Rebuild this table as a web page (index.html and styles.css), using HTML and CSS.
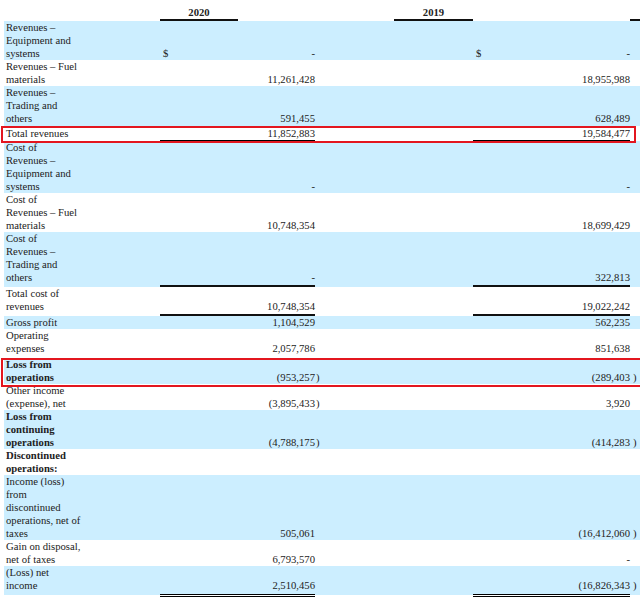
FILE: index.html
```html
<!DOCTYPE html>
<html>
<head>
<meta charset="utf-8">
<link rel="stylesheet" href="styles.css">
</head>
<body>
<div class="sheet">
  <div class="head">
    <div class="h-gap1"></div>
    <div class="h-year h-y1">2020</div>
    <div class="h-gap2"></div>
    <div class="h-year h-y2">2019</div>
    <div class="h-gap3"></div>
    <div class="h-year h-y3"></div>
  </div>
  <table class="fin">
    <colgroup>
      <col class="c-label"><col class="c-gap"><col class="c-cur"><col class="c-num1"><col class="c-par1"><col class="c-gap2"><col class="c-cur"><col class="c-num2"><col class="c-par2">
    </colgroup>
    <tbody>
      <tr class="b">
        <td class="lab">Revenues –<br>Equipment and<br>systems</td><td></td><td class="cur">$</td><td class="num">-</td><td class="par"></td><td></td><td class="cur">$</td><td class="num">-</td><td class="par2"></td>
      </tr>
      <tr class="r2">
        <td class="lab">Revenues – Fuel<br>materials</td><td></td><td class="cur"></td><td class="num">11,261,428</td><td class="par"></td><td></td><td class="cur"></td><td class="num">18,955,988</td><td class="par2"></td>
      </tr>
      <tr class="b r3">
        <td class="lab">Revenues –<br>Trading and<br>others</td><td></td><td class="cur"></td><td class="num">591,455</td><td class="par"></td><td></td><td class="cur"></td><td class="num">628,489</td><td class="par2"></td>
      </tr>
      <tr class="dbl total">
        <td class="lab">Total revenues</td><td></td><td class="cur u"></td><td class="num u">11,852,883</td><td class="par"></td><td></td><td class="cur u"></td><td class="num u">19,584,477</td><td class="par2"></td>
      </tr>
      <tr class="b r5">
        <td class="lab">Cost of<br>Revenues –<br>Equipment and<br>systems</td><td></td><td class="cur"></td><td class="num">-</td><td class="par"></td><td></td><td class="cur"></td><td class="num">-</td><td class="par2"></td>
      </tr>
      <tr>
        <td class="lab">Cost of<br>Revenues – Fuel<br>materials</td><td></td><td class="cur"></td><td class="num">10,748,354</td><td class="par"></td><td></td><td class="cur"></td><td class="num">18,699,429</td><td class="par2"></td>
      </tr>
      <tr class="b sgl r7">
        <td class="lab">Cost of<br>Revenues –<br>Trading and<br>others</td><td></td><td class="cur u"></td><td class="num u">-</td><td class="par"></td><td></td><td class="cur u"></td><td class="num u">322,813</td><td class="par2"></td>
      </tr>
      <tr class="sgl r8">
        <td class="lab">Total cost of<br>revenues</td><td></td><td class="cur u"></td><td class="num u">10,748,354</td><td class="par"></td><td></td><td class="cur u"></td><td class="num u">19,022,242</td><td class="par2"></td>
      </tr>
      <tr class="b r9">
        <td class="lab">Gross profit</td><td></td><td class="cur"></td><td class="num">1,104,529</td><td class="par"></td><td></td><td class="cur"></td><td class="num">562,235</td><td class="par2"></td>
      </tr>
      <tr class="opex">
        <td class="lab">Operating<br>expenses</td><td></td><td class="cur"></td><td class="num">2,057,786</td><td class="par"></td><td></td><td class="cur"></td><td class="num">851,638</td><td class="par2"></td>
      </tr>
      <tr class="b">
        <td class="lab bold">Loss from<br>operations</td><td></td><td class="cur"></td><td class="num">(953,257</td><td class="par">)</td><td></td><td class="cur"></td><td class="num">(289,403</td><td class="par2">)</td>
      </tr>
      <tr>
        <td class="lab">Other income<br>(expense), net</td><td></td><td class="cur"></td><td class="num">(3,895,433</td><td class="par">)</td><td></td><td class="cur"></td><td class="num">3,920</td><td class="par2"></td>
      </tr>
      <tr class="b">
        <td class="lab bold">Loss from<br>continuing<br>operations</td><td></td><td class="cur"></td><td class="num">(4,788,175</td><td class="par">)</td><td></td><td class="cur"></td><td class="num">(414,283</td><td class="par2">)</td>
      </tr>
      <tr>
        <td class="lab bold">Discontinued<br>operations:</td><td></td><td class="cur"></td><td class="num"></td><td class="par"></td><td></td><td class="cur"></td><td class="num"></td><td class="par2"></td>
      </tr>
      <tr class="b r15">
        <td class="lab">Income (loss)<br>from<br>discontinued<br>operations, net of<br>taxes</td><td></td><td class="cur"></td><td class="num">505,061</td><td class="par"></td><td></td><td class="cur"></td><td class="num">(16,412,060</td><td class="par2">)</td>
      </tr>
      <tr>
        <td class="lab">Gain on disposal,<br>net of taxes</td><td></td><td class="cur"></td><td class="num">6,793,570</td><td class="par"></td><td></td><td class="cur"></td><td class="num">-</td><td class="par2"></td>
      </tr>
      <tr class="b dbl last">
        <td class="lab">(Loss) net<br>income</td><td></td><td class="cur u"></td><td class="num u">2,510,456</td><td class="par"></td><td></td><td class="cur u"></td><td class="num u">(16,826,343</td><td class="par2">)</td>
      </tr>
    </tbody>
  </table>
  <div class="mark mark-total"></div>
  <div class="mark mark-loss"></div>
</div>
</body>
</html>
```

FILE: styles.css
```css
html, body {
  margin: 0;
  padding: 0;
  background: #ffffff;
  overflow: hidden;
}

body {
  width: 640px;
  height: 603px;
  font-family: "Liberation Serif", "Times New Roman", serif;
  font-size: 10.67px;
  line-height: 13px;
  color: #222222;
}

.sheet {
  position: relative;
  width: 640px;
}

.head {
  display: flex;
  padding-top: 5.6px;
}

.h-gap1 { width: 160px; }
.h-gap2 { width: 156px; }
.h-gap3 { width: 157px; }

.h-year {
  height: 13px;
  line-height: 13px;
  font-weight: bold;
  text-align: center;
  border-bottom: 2px solid #111;
}
.h-y1 { width: 78px; }
.h-y2 { width: 79px; }
.h-y3 { width: 10px; }

.fin {
  margin-left: 4px;
  width: 636px;
  table-layout: fixed;
  border-collapse: separate;
  border-spacing: 0;
}

.c-label { width: 86px; }
.c-gap { width: 70px; }
.c-cur { width: 15px; }
.c-num1 { width: 140px; }
.c-par1 { width: 5px; }
.c-gap2 { width: 153px; }
.c-num2 { width: 142px; }
.c-par2 { width: 10px; }

.fin td {
  padding: 0;
  vertical-align: bottom;
  white-space: nowrap;
}

.fin tr.b { background: #cceeff; }

/* small spacing adjustments between rows */
.fin tr.r2 td { padding-bottom: 0.3px; }
.fin tr.r3 td { padding-bottom: 1.4px; }
.fin tr.total td { padding-top: 1px; padding-bottom: 0.6px; }
.fin tr.r5 td { padding-bottom: 0.5px; }
.fin tr.r7 td { padding-bottom: 0.7px; }
.fin tr.r8 td { padding-bottom: 0.8px; }
.fin tr.r9 td { padding-bottom: 0.4px; }
.fin tr.opex td { padding-bottom: 2.3px; }
.fin tr.r15 td { padding-bottom: 0.5px; }
.fin tr.last td { padding-bottom: 2.5px; }

.fin td.lab { padding-left: 2px; }
.bold { font-weight: bold; }

.fin td.cur { padding-left: 3px; text-align: left; }
.num { text-align: right; }
.fin td.par { text-align: left; padding-left: 1px; }
.fin td.par2 { text-align: left; padding-left: 3px; }

.fin tr.sgl td { border-bottom: 2px solid transparent; }
.fin tr.sgl td.u { border-bottom-color: #111; }

.fin tr.dbl td.u { position: relative; }
.fin tr.dbl td.u::after {
  content: "";
  position: absolute;
  left: 0;
  right: 0;
  bottom: -2.5px;
  border-top: 3px double #000;
}

.mark {
  position: absolute;
  border: 2px solid #e3161f;
  box-sizing: border-box;
}

.mark-total {
  left: 1px;
  top: 126px;
  width: 635px;
  height: 16.5px;
}

.mark-loss {
  left: 1px;
  top: 357.5px;
  width: 650px;
  height: 29.5px;
}
```
